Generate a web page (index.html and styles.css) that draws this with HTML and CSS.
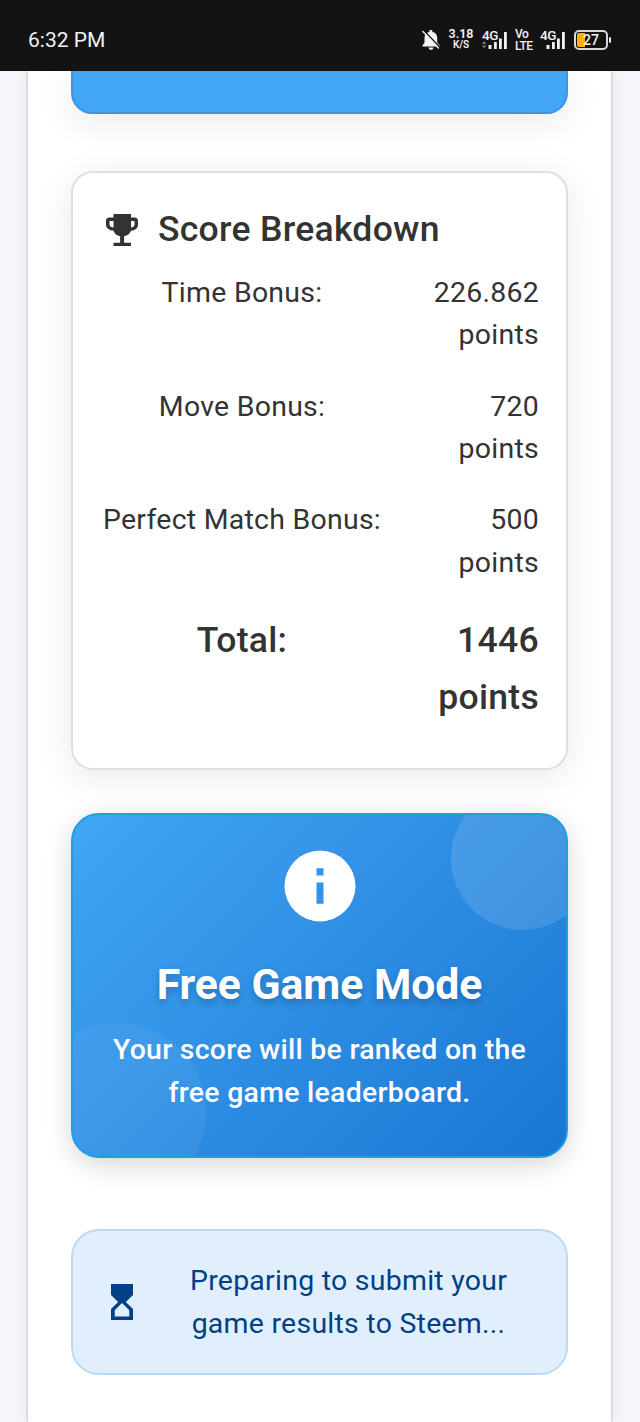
FILE: index.html
```html
<!DOCTYPE html>
<html lang="en">
<head>
<meta charset="utf-8">
<title>Free Game Mode</title>
<link rel="stylesheet" href="styles.css">
</head>
<body>
<header class="status-bar">
  <span class="clock">6:32 PM</span>
  <div class="indicators">
    <svg class="bell" width="18" height="20" viewBox="0 0 18 20"><path fill="#f2f2f2" d="M2.500 7.500C2.500 4.500 4.600 2.400 7.400 2V1.200a1.500 1.500 0 0 1 3 0V2c2.800.4 4.800 2.500 4.800 5.500v5.200l2.300 2.600v1.200H.5v-1.200l2-2.600zM6.500 17.500h5a2.500 2.500 0 0 1-5 0z"/><path d="M1.500 0 18 17.500" stroke="#131313" stroke-width="1.300"/><path d="M.4 1 16.800 18.400" stroke="#f2f2f2" stroke-width="1.400"/></svg>
    <div class="stack speed"><span>3.18</span><span class="unit">K/S</span></div>
    <div class="signal first"><span>4G</span>
      <svg width="26" height="20" viewBox="0 0 26 20"><path fill="#777" d="m0 14 2.200-3L4.400 14zm0 1.500 2.200 3 2.200-3z"/><path fill="#f2f2f2" d="M6.500 15h3v4h-3zM12 12h2.800v7H12zM17 8.500h2.800V19H17zM22 2h2.800v17H22z"/></svg></div>
    <div class="stack volte"><span>Vo</span><span>LTE</span></div>
    <div class="signal second"><span>4G</span>
      <svg width="26" height="20" viewBox="0 0 26 20"><path fill="#f2f2f2" d="M6.500 15h3v4h-3zM12 12h2.800v7H12zM17 8.500h2.800V19H17zM22 2h2.800v17H22z"/></svg></div>
    <div class="battery"><span>27</span></div>
  </div>
</header>
<main class="page">
  <div class="previous-card"></div>
  <section class="score-card">
    <h2 class="score-title">
      <svg class="trophy" width="34" height="34" viewBox="0 0 34 34"><path fill="#333" fill-rule="evenodd" d="M8.500 1h17.500v3.500h3.500c2.300 0 3.500 1.200 3.500 3.500v3.500c0 3.600-2.700 6-7 6.200-1.100 3-3.500 4.900-6.900 5.600V29.700H26V33H8.500v-3.300h6.600v-6.400c-3.300-.7-5.700-2.600-6.600-5.600C4.100 17.500 1 15.100 1 11.500V8c0-2.300 1.200-3.500 3.500-3.500h4zm0 7H5.200c-.4 0-.7.300-.7.700v2.800c0 1.700 1.500 2.900 4 3.100zm17.500 0v6.600c2.200-.2 3.600-1.400 3.600-3.100V8.700c0-.4-.3-.7-.7-.7z"/></svg>
      <span>Score Breakdown</span>
    </h2>
    <div class="row"><span class="label">Time Bonus:</span><span class="value">226.862 points</span></div>
    <div class="row"><span class="label">Move Bonus:</span><span class="value">720<br>points</span></div>
    <div class="row"><span class="label">Perfect Match Bonus:</span><span class="value">500<br>points</span></div>
    <div class="row total"><span class="label">Total:</span><span class="value">1446 points</span></div>
  </section>
  <section class="mode-card">
    <svg class="info" width="72" height="72" viewBox="0 0 72 72"><path fill="#fff" fill-rule="evenodd" d="M36 .5a35.500 35.500 0 1 1 0 71 35.500 35.500 0 0 1 0-71zM32.500 18.300v7.200h7v-7.200zm0 14.200v21.300h7V32.500z"/></svg>
    <h2 class="mode-title">Free Game Mode</h2>
    <p class="mode-text">Your score will be ranked on the free game leaderboard.</p>
  </section>
  <section class="notice">
    <svg class="hourglass" width="22" height="36" viewBox="0 0 22 36"><path fill="#004085" fill-rule="evenodd" d="M0 0h22v11l-7.200 7 7.200 7v11H0V25l7.200-7L0 11zm11 19-7.300 7.200v6.300h14.600v-6.300z"/></svg>
    <p class="notice-text">Preparing to submit your game results to Steem...</p>
  </section>
</main>
</body>
</html>
```
FILE: styles.css
```css
* { box-sizing: border-box; }
body {
  margin: 0;
  height: 1422px;
  overflow: hidden;
  background: #f4f6fb;
  color: #333;
  font-family: Roboto, "Noto Sans", sans-serif;
  font-size: 28.44px;
  line-height: 42.67px;
  letter-spacing: 0.267px;
}
h2, p { margin: 0; }
svg { display: block; flex: none; }

.status-bar {
  position: relative;
  z-index: 1;
  display: flex;
  justify-content: space-between;
  height: 71px;
  padding: 9px 29px 0 28px;
  background: #131313;
  color: #f2f2f2;
  letter-spacing: 0;
}
.clock { font-size: 21px; line-height: 63px; }
.indicators { display: flex; height: 62px; align-items: center; font-weight: 500; }
.stack { display: flex; flex-direction: column; align-items: center; font-size: 12px; line-height: 12px; }
.bell { margin-right: 1px; margin-left: -1px; position: relative; left: 1px; }
.speed { width: 26px; margin-left: 8px; margin-bottom: 2px; font-size: 12.500px; font-weight: 600; }
.unit { font-size: 10px; line-height: 10px; }
.signal { display: grid; width: 26px; }
.signal > * { grid-area: 1 / 1; }
.signal span { margin-top: -2px; font-size: 13.500px; line-height: 14px; letter-spacing: -0.500px; }
.first { margin-left: 8px; }
.volte { width: 19px; margin-left: 7px; align-items: flex-start; font-size: 12px; letter-spacing: -0.500px; }
.second { margin-left: 6px; }
.battery {
  position: relative;
  width: 34px;
  height: 20px;
  margin-left: 8px;
  margin-right: 3px;
  border: 2px solid #d8d8d8;
  border-radius: 5px;
  background: linear-gradient(90deg, #ffb300 8px, transparent 8px) content-box;
  padding: 1px;
  font-size: 14px;
  line-height: 15px;
  text-align: center;
}
.battery::after {
  content: "";
  position: absolute;
  right: -5px;
  top: 5px;
  width: 2px;
  height: 6px;
  border-radius: 1px;
  background: #e8e8e8;
}

.page {
  width: 583px;
  height: 1351px;
  margin-left: 28px;
  padding: 0 43px;
  background: #fff;
  box-shadow: 0 0 18px rgba(0, 0, 0, 0.08), 0 0 3px rgba(0, 0, 0, 0.28);
}
.previous-card {
  height: 43px;
  border: 2px solid #3d94e2;
  border-top: 0;
  border-radius: 0 0 21px 21px;
  background: #42a5f5;
  box-shadow: 0 7px 36px rgba(0, 0, 0, 0.09);
}
.score-card {
  height: 599px;
  margin-top: 57px;
  padding: 28px 27px 28px 28px;
  border: 2px solid #dfdfdf;
  border-radius: 22px;
  background: #fff;
  box-shadow: 0 7px 36px rgba(0, 0, 0, 0.09);
}
.score-title {
  display: flex;
  align-items: center;
  gap: 19px;
  height: 56px;
  padding-left: 4px;
  font-size: 35.560px;
  font-weight: 500;
}
.trophy { margin-top: 2px; }
.row { display: flex; margin: 14.800px 0 28.400px; }
.row ~ .row { margin-top: 0; }
.label { width: 282px; text-align: center; white-space: nowrap; }
.value { flex: 1; text-align: right; }
.row.total { margin-top: -1.300px; font-size: 35.560px; font-weight: 500; line-height: 56.900px; }

.mode-card {
  position: relative;
  display: flex;
  flex-direction: column;
  align-items: center;
  height: 345px;
  margin-top: 43px;
  padding: 35px 34px;
  border: 2px solid #1f9ee4;
  border-radius: 28px;
  overflow: hidden;
  background: linear-gradient(135deg, #42a5f5, #1976d2) border-box;
  box-shadow: 0 7px 27px rgba(0, 0, 0, 0.16);
  color: #fff;
  text-align: center;
}
.mode-card::before, .mode-card::after {
  content: "";
  position: absolute;
  border-radius: 50%;
}
.mode-card::before {
  top: -28px;
  right: -28px;
  width: 143px;
  height: 143px;
  background: rgba(255, 255, 255, 0.12);
}
.mode-card::after {
  left: -45px;
  bottom: -45px;
  width: 178px;
  height: 178px;
  background: rgba(255, 255, 255, 0.06);
}
.mode-title {
  margin-top: 34px;
  font-size: 42.670px;
  font-weight: 700;
  line-height: 56px;
  letter-spacing: 0;
  text-shadow: 0 3.500px 7px rgba(0, 0, 0, 0.22);
}
.mode-text { margin-top: 17px; font-weight: 500; }

.notice {
  display: flex;
  align-items: center;
  height: 146px;
  margin-top: 71px;
  padding: 0 28px 0 38px;
  border: 2px solid #bcd9f4;
  border-radius: 28px;
  background: #e1effd;
  color: #004085;
}
.notice-text { flex: 1; margin: 2px 0 0 26px; padding: 0 20px; text-align: center; }
```
